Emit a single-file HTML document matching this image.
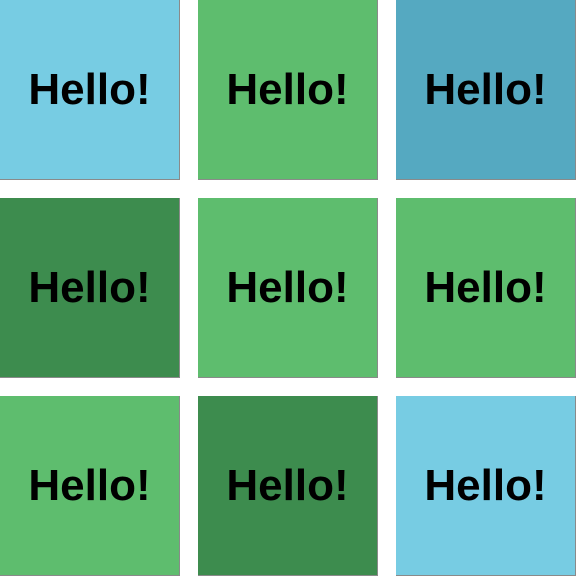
<!DOCTYPE html>
<html><head><style>
html,body{margin:0;padding:0;background:#fff;width:577px;height:577px;overflow:hidden}
.b{position:absolute;box-sizing:border-box;width:180px;height:180px;padding-top:1px;border-right:1px solid #8a8a8a;border-bottom:1px solid #8a8a8a;display:flex;align-items:center;justify-content:center;font:bold 44px "Liberation Sans",sans-serif;color:#000}
.lb{background:#77cce3}.g{background:#5ebd6e}.t{background:#55a9c1}.dg{background:#3d8c4e}
</style></head><body>
<div class="b lb" style="left:0;top:0">Hello!</div>
<div class="b g" style="left:198px;top:0">Hello!</div>
<div class="b t" style="left:396px;top:0">Hello!</div>
<div class="b dg" style="left:0;top:198px">Hello!</div>
<div class="b g" style="left:198px;top:198px">Hello!</div>
<div class="b g" style="left:396px;top:198px">Hello!</div>
<div class="b g" style="left:0;top:396px">Hello!</div>
<div class="b dg" style="left:198px;top:396px">Hello!</div>
<div class="b lb" style="left:396px;top:396px">Hello!</div>
</body></html>
